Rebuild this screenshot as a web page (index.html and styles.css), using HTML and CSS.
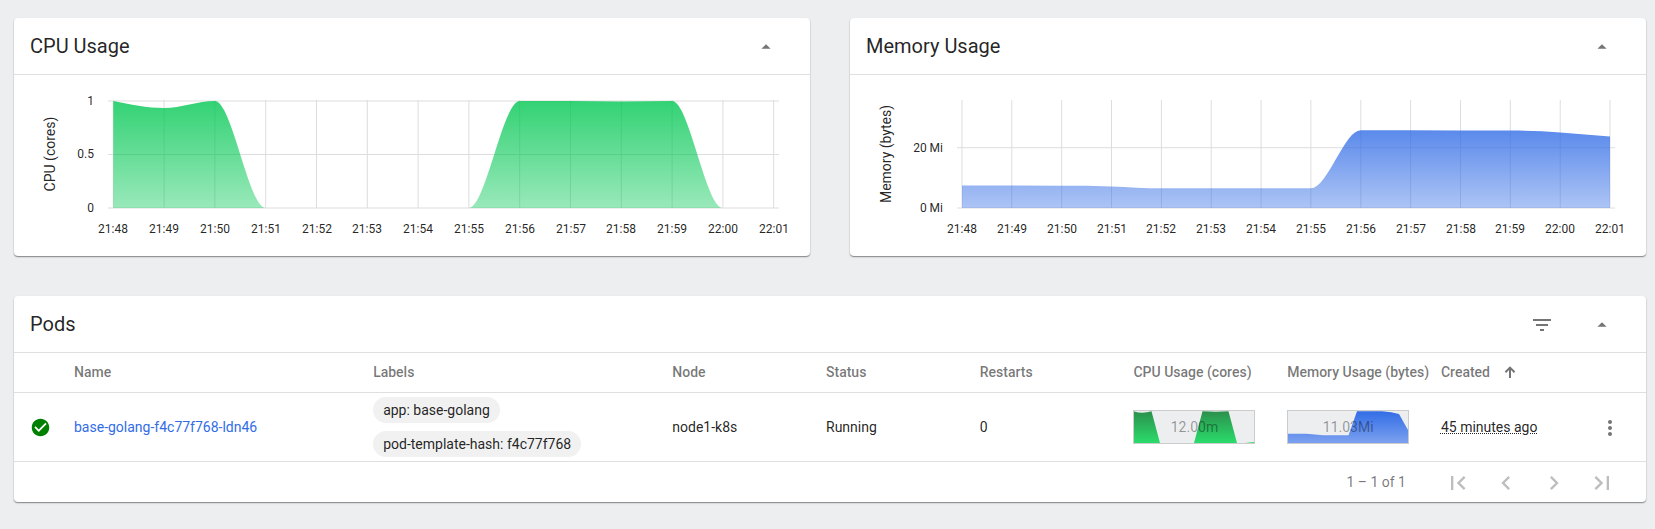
FILE: index.html
```html
<!DOCTYPE html>
<html lang="en">
<head>
<meta charset="utf-8">
<meta name="viewport" content="width=device-width, initial-scale=1">
<title>Pods</title>
<link rel="stylesheet" href="styles.css">
</head>
<body>
<main class="page">
  <div class="charts">
    <section class="card">
      <header class="card-header">
        <h2 class="card-title">CPU Usage</h2>
        <button class="icon-button" type="button" aria-label="Collapse CPU usage"><svg class="icon-caret" viewBox="0 0 24 24"><path d="M7 14l5-5 5 5z"/></svg></button>
      </header>
      <svg class="chart" viewBox="0 0 796 181" role="img" aria-label="CPU usage in cores">
        <defs>
          <linearGradient id="cpu-fill" x1="0" y1="0" x2="0" y2="1">
            <stop class="cpu-strong" offset="0"/><stop class="cpu-soft" offset="1"/>
          </linearGradient>
        </defs>
        <path class="grid" d="M99.3 25v108M150.1 25v108M200.9 25v108M251.7 25v108M302.5 25v108M353.3 25v108M404.1 25v108M454.9 25v108M505.7 25v108M556.5 25v108M607.3 25v108M658.1 25v108M708.9 25v108M759.7 25v108M94 26h671M94 79.5h671M94 133h671"/>
        <path fill="url(#cpu-fill)" d="M99.3 26C116.2 29.4 133.2 33 150.1 33S184 26 200.9 26C217.8 26 234.8 133 251.7 133H454.9C471.8 133 488.8 26 505.7 26H556.5C573.4 26 590.4 26.5 607.3 26.5S641.2 26 658.1 26C675 26 692 133 708.9 133H99.3z"/>
        <g class="tick tick-y">
          <text x="80" y="30">1</text><text x="80" y="83">0.5</text><text x="80" y="137">0</text>
        </g>
        <g class="tick tick-x">
          <text x="99" y="158">21:48</text><text x="150" y="158">21:49</text><text x="201" y="158">21:50</text><text x="252" y="158">21:51</text><text x="303" y="158">21:52</text><text x="353" y="158">21:53</text><text x="404" y="158">21:54</text><text x="455" y="158">21:55</text><text x="506" y="158">21:56</text><text x="557" y="158">21:57</text><text x="607" y="158">21:58</text><text x="658" y="158">21:59</text><text x="709" y="158">22:00</text><text x="760" y="158">22:01</text>
        </g>
        <text class="axis-title" transform="translate(41 79) rotate(-90)">CPU (cores)</text>
      </svg>
    </section>
    <section class="card">
      <header class="card-header">
        <h2 class="card-title">Memory Usage</h2>
        <button class="icon-button" type="button" aria-label="Collapse memory usage"><svg class="icon-caret" viewBox="0 0 24 24"><path d="M7 14l5-5 5 5z"/></svg></button>
      </header>
      <svg class="chart" viewBox="0 0 796 181" role="img" aria-label="Memory usage in bytes">
        <defs>
          <linearGradient id="memory-fill" x1="0" y1="0" x2="0" y2="1">
            <stop class="memory-strong" offset="0"/><stop class="memory-soft" offset="1"/>
          </linearGradient>
        </defs>
        <path class="grid" d="M112 25v108M161.8 25v108M211.7 25v108M261.5 25v108M311.4 25v108M361.2 25v108M411.1 25v108M460.9 25v108M510.8 25v108M560.6 25v108M610.5 25v108M660.3 25v108M710.2 25v108M760 25v108M107 72.7h658M107 133h658"/>
        <path fill="url(#memory-fill)" d="M112 110.4L211.7 110.7C228.3 110.7 244.9 110.8 261.5 111.4S294.8 113.3 311.4 113.3H460.9C477.5 113.3 494.2 55.2 510.8 55.2L560.6 55.3 610.5 55.6H660.3C676.9 55.6 693.6 56.2 710.2 57.4S743.4 60.2 760 61.6V133H112z"/>
        <g class="tick tick-y">
          <text x="93" y="77">20 Mi</text><text x="93" y="137">0 Mi</text>
        </g>
        <g class="tick tick-x">
          <text x="112" y="158">21:48</text><text x="162" y="158">21:49</text><text x="212" y="158">21:50</text><text x="262" y="158">21:51</text><text x="311" y="158">21:52</text><text x="361" y="158">21:53</text><text x="411" y="158">21:54</text><text x="461" y="158">21:55</text><text x="511" y="158">21:56</text><text x="561" y="158">21:57</text><text x="611" y="158">21:58</text><text x="660" y="158">21:59</text><text x="710" y="158">22:00</text><text x="760" y="158">22:01</text>
        </g>
        <text class="axis-title" transform="translate(41 79) rotate(-90)">Memory (bytes)</text>
      </svg>
    </section>
  </div>

  <section class="card">
    <header class="card-header">
      <h2 class="card-title">Pods</h2>
      <button class="icon-button" type="button" aria-label="Filter pods"><svg class="icon" viewBox="0 0 24 24"><path d="M10 18h4v-2h-4v2zM3 6v2h18V6H3zm3 7h12v-2H6v2z"/></svg></button>
      <button class="icon-button" type="button" aria-label="Collapse pods"><svg class="icon-caret" viewBox="0 0 24 24"><path d="M7 14l5-5 5 5z"/></svg></button>
    </header>
    <table class="pods">
      <colgroup>
        <col class="col-status-icon"><col class="col-wide"><col class="col-wide"><col class="col"><col class="col"><col class="col"><col class="col"><col class="col"><col><col class="col-menu">
      </colgroup>
      <thead>
        <tr>
          <th></th><th scope="col">Name</th><th scope="col">Labels</th><th scope="col">Node</th><th scope="col">Status</th><th scope="col">Restarts</th><th scope="col">CPU Usage (cores)</th><th scope="col">Memory Usage (bytes)</th>
          <th scope="col" aria-sort="ascending"><button class="sort" type="button">Created<svg class="sort-arrow" viewBox="0 0 12 12"><path d="M6 12V1.5M1.4 6.2L6 1.6L10.6 6.2"/></svg></button></th>
          <th></th>
        </tr>
      </thead>
      <tbody>
        <tr>
          <td class="cell-icon"><svg class="icon-ok" viewBox="0 0 24 24" role="img" aria-label="Healthy"><path d="M12 2C6.48 2 2 6.48 2 12s4.48 10 10 10 10-4.48 10-10S17.52 2 12 2zm-2 15l-5-5 1.41-1.41L10 14.17l7.59-7.59L19 8l-9 9z"/></svg></td>
          <td><a class="link" href="#">base-golang-f4c77f768-ldn46</a></td>
          <td><div class="chips"><span class="chip">app: base-golang</span><span class="chip">pod-template-hash: f4c77f768</span></div></td>
          <td>node1-k8s</td>
          <td>Running</td>
          <td>0</td>
          <td>
            <div class="spark">
              <svg class="spark-plot" viewBox="0 0 120 32" preserveAspectRatio="none" aria-hidden="true">
                <defs><linearGradient id="spark-cpu" x1="0" y1="0" x2="0" y2="1"><stop offset="0" stop-color="#2b904c"/><stop offset="1" stop-color="#2bdc6c"/></linearGradient></defs>
                <path fill="url(#spark-cpu)" d="M0 .5Q8.7 3 17.5 .3L26 32H0zM60 32L68.5 .3Q82 1 94.5 .3L103 32zM111 32L120 31V32z"/>
              </svg>
              <span class="spark-value">12.00m</span>
            </div>
          </td>
          <td>
            <div class="spark">
              <svg class="spark-plot" viewBox="0 0 120 32" preserveAspectRatio="none" aria-hidden="true">
                <defs><linearGradient id="spark-memory" x1="0" y1="0" x2="0" y2="1"><stop offset="0" stop-color="#326de6"/><stop offset="1" stop-color="#7ca1ef"/></linearGradient></defs>
                <path fill="url(#spark-memory)" d="M0 22.8H18Q28 23.4 35 24.2H60.5L69 .2H94Q104 1 111 3L120 19V32H0z"/>
              </svg>
              <span class="spark-value">11.03Mi</span>
            </div>
          </td>
          <td><span class="age">45 minutes ago</span></td>
          <td class="cell-menu"><button class="icon-button" type="button" aria-label="Pod actions"><svg class="icon" viewBox="0 0 24 24"><path d="M12 8c1.1 0 2-.9 2-2s-.9-2-2-2-2 .9-2 2 .9 2 2 2zm0 2c-1.1 0-2 .9-2 2s.9 2 2 2 2-.9 2-2-.9-2-2-2zm0 6c-1.1 0-2 .9-2 2s.9 2 2 2 2-.9 2-2-.9-2-2-2z"/></svg></button></td>
        </tr>
      </tbody>
    </table>
    <nav class="paginator" aria-label="Pages">
      <span class="range">1 – 1 of 1</span>
      <button class="page-button" type="button" disabled aria-label="First page"><svg class="page-icon" viewBox="0 0 24 24"><path d="M18.41 16.59L13.82 12l4.59-4.59L17 6l-6 6 6 6zM6 6h2v12H6z"/></svg></button>
      <button class="page-button" type="button" disabled aria-label="Previous page"><svg class="page-icon" viewBox="0 0 24 24"><path d="M15.41 7.41L14 6l-6 6 6 6 1.41-1.41L10.83 12z"/></svg></button>
      <button class="page-button" type="button" disabled aria-label="Next page"><svg class="page-icon" viewBox="0 0 24 24"><path d="M10 6L8.59 7.41 13.17 12l-4.58 4.59L10 18l6-6z"/></svg></button>
      <button class="page-button" type="button" disabled aria-label="Last page"><svg class="page-icon" viewBox="0 0 24 24"><path d="M5.59 7.41L10.18 12l-4.59 4.59L7 18l6-6-6-6zM16 6h2v12h-2z"/></svg></button>
    </nav>
  </section>
</main>
</body>
</html>
```

FILE: styles.css
```css
* {
  box-sizing: border-box;
}

body {
  margin: 0;
  background: #edeef0;
  color: rgba(0, 0, 0, 0.87);
  font: 14px/20px Roboto, "Liberation Sans", sans-serif;
}

button {
  padding: 0;
  border: 0;
  background: none;
  color: inherit;
  font: inherit;
}

svg {
  display: block;
}

.page {
  display: grid;
  gap: 40px;
  padding: 18px 9px 18px 14px;
}

.charts {
  display: grid;
  grid-template-columns: 1fr 1fr;
  gap: 40px;
}

.card {
  min-width: 0;
  border-radius: 4px;
  background: #fff;
  box-shadow: 0 1px 1px rgba(0, 0, 0, 0.3), 0 1px 2px rgba(0, 0, 0, 0.2);
}

.card-header {
  display: flex;
  align-items: center;
  gap: 20px;
  height: 57px;
  padding: 0 24px 0 16px;
  border-bottom: 1px solid #dfdfdf;
}

.card-title {
  flex: 1;
  margin: 0;
  font-size: 20px;
  font-weight: 400;
  line-height: 28px;
}

.icon-button {
  display: grid;
  place-items: center;
  width: 40px;
  height: 40px;
  padding-top: 2px;
  color: #757575;
}

.icon {
  width: 24px;
  height: 24px;
  fill: currentColor;
}

.icon-caret {
  width: 22px;
  height: 22px;
  fill: currentColor;
}

/* Charts */

.chart {
  width: 100%;
  height: auto;
}

.grid {
  fill: none;
  stroke: #ddd;
}

.tick,
.axis-title {
  fill: rgba(0, 0, 0, 0.87);
}

.tick {
  font-size: 12px;
}

.tick-y {
  text-anchor: end;
}

.tick-x,
.axis-title {
  text-anchor: middle;
}

.axis-title {
  font-size: 14px;
}

.cpu-strong {
  stop-color: #00c752;
  stop-opacity: 0.8;
}

.cpu-soft {
  stop-color: #00c752;
  stop-opacity: 0.4;
}

.memory-strong {
  stop-color: #326de6;
  stop-opacity: 0.8;
}

.memory-soft {
  stop-color: #326de6;
  stop-opacity: 0.4;
}

/* Pods table */

.pods {
  width: 100%;
  table-layout: fixed;
  border-collapse: separate;
  border-spacing: 0;
}

.col-status-icon {
  width: 60px;
}

.col-wide {
  width: 18.33%;
}

.col {
  width: 9.42%;
}

.col-menu {
  width: 56px;
}

.pods th,
.pods td {
  padding: 0;
  border-bottom: 1px solid #dfdfdf;
  text-align: left;
  white-space: nowrap;
}

.pods th {
  height: 40px;
  padding-bottom: 2px;
  color: rgba(0, 0, 0, 0.54);
  font-weight: 500;
}

.pods .cell-icon {
  padding-left: 16px;
}

.icon-ok {
  width: 21px;
  height: 21px;
  fill: #008000;
}

.sort {
  display: flex;
  align-items: center;
  gap: 14px;
}

.sort-arrow {
  width: 12px;
  height: 12px;
  fill: none;
  stroke: currentColor;
  stroke-width: 2;
}

.link {
  color: #326de6;
  text-decoration: none;
}

.chips {
  display: flex;
  flex-direction: column;
  align-items: flex-start;
  gap: 8px;
  padding: 4px 0;
}

.chip {
  padding: 3px 10px;
  border-radius: 13px;
  background: #f1f1f1;
}

.spark {
  display: grid;
  width: 122px;
  height: 34px;
  border: 1px solid #ccc;
  background: #edeef0;
}

.spark-plot,
.spark-value {
  grid-area: 1 / 1;
}

.spark-plot {
  width: 100%;
  height: 100%;
}

.spark-value {
  place-self: center;
  z-index: 1;
  color: rgba(0, 0, 0, 0.38);
}

.age {
  text-decoration: underline dotted 1px;
}

/* Paginator */

.paginator {
  display: flex;
  align-items: center;
  justify-content: flex-end;
  gap: 8px;
  height: 40px;
  padding-right: 24px;
  color: rgba(0, 0, 0, 0.54);
}

.range {
  margin-right: 24px;
}

.page-button {
  display: grid;
  place-items: center;
  width: 40px;
  height: 40px;
  padding-top: 2px;
  color: rgba(0, 0, 0, 0.26);
}

.page-icon {
  width: 28px;
  height: 28px;
  fill: currentColor;
}
```
